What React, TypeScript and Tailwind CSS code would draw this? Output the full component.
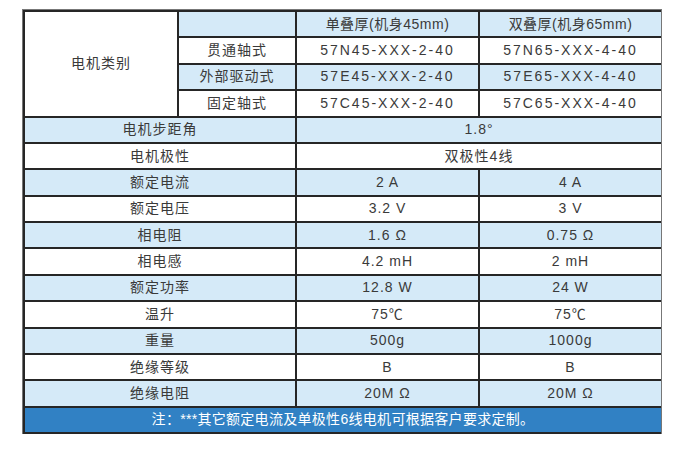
import React from "react";

const B = "bg-[#d5eaf8]";
const W = "bg-white";

type Row = { label: string; a: string; b?: string; bg: string };

const rows: Row[] = [
  { label: "电机步距角", a: "1.8°", bg: B },
  { label: "电机极性", a: "双极性4线", bg: W },
  { label: "额定电流", a: "2 A", b: "4 A", bg: B },
  { label: "额定电压", a: "3.2 V", b: "3 V", bg: W },
  { label: "相电阻", a: "1.6 Ω", b: "0.75 Ω", bg: B },
  { label: "相电感", a: "4.2 mH", b: "2 mH", bg: W },
  { label: "额定功率", a: "12.8 W", b: "24 W", bg: B },
  { label: "温升", a: "75℃", b: "75℃", bg: W },
  { label: "重量", a: "500g", b: "1000g", bg: B },
  { label: "绝缘等级", a: "B", b: "B", bg: W },
  { label: "绝缘电阻", a: "20M Ω", b: "20M Ω", bg: B },
];

const cell = "flex items-center justify-center";

export default function App() {
  return (
    <div
      className="w-[684px] h-[452px] bg-white pt-[9px] pl-[22px] text-[14px] text-[#3a3a3a]"
      style={{ fontFamily: '"Liberation Sans", "Noto Sans CJK SC", sans-serif' }}
    >
      <div className="grid w-[640px] h-[425px] grid-cols-[152px_116px_181px_181px] grid-rows-[repeat(16,1fr)] gap-[2px] p-[2px] bg-[#262626] border-l border-r border-t border-[#777]">
        <div className={`${cell} ${W} row-span-4 tracking-[1px]`}>电机类别</div>
        <div className={`${cell} ${B}`}></div>
        <div className={`${cell} ${B} tracking-[0.5px]`}>单叠厚(机身45mm)</div>
        <div className={`${cell} ${B} tracking-[0.5px]`}>双叠厚(机身65mm)</div>

        <div className={`${cell} ${W} tracking-[1px]`}>贯通轴式</div>
        <div className={`${cell} ${W} tracking-[2px]`}>57N45-XXX-2-40</div>
        <div className={`${cell} ${W} tracking-[2px]`}>57N65-XXX-4-40</div>

        <div className={`${cell} ${B} tracking-[1px]`}>外部驱动式</div>
        <div className={`${cell} ${B} tracking-[2px]`}>57E45-XXX-2-40</div>
        <div className={`${cell} ${B} tracking-[2px]`}>57E65-XXX-4-40</div>

        <div className={`${cell} ${W} tracking-[1px]`}>固定轴式</div>
        <div className={`${cell} ${W} tracking-[2px]`}>57C45-XXX-2-40</div>
        <div className={`${cell} ${W} tracking-[2px]`}>57C65-XXX-4-40</div>

        {rows.map((r) => (
          <React.Fragment key={r.label}>
            <div className={`${cell} ${r.bg} col-span-2 tracking-[1px]`}>{r.label}</div>
            {r.b === undefined ? (
              <div className={`${cell} ${r.bg} col-span-2 tracking-[1px]`}>{r.a}</div>
            ) : (
              <>
                <div className={`${cell} ${r.bg} tracking-[1px]`}>{r.a}</div>
                <div className={`${cell} ${r.bg} tracking-[1px]`}>{r.b}</div>
              </>
            )}
          </React.Fragment>
        ))}

        <div className={`${cell} bg-[#3181c4] col-span-4 text-white tracking-[0.3px]`}>
          注：***其它额定电流及单极性6线电机可根据客户要求定制。
        </div>
      </div>
    </div>
  );
}
